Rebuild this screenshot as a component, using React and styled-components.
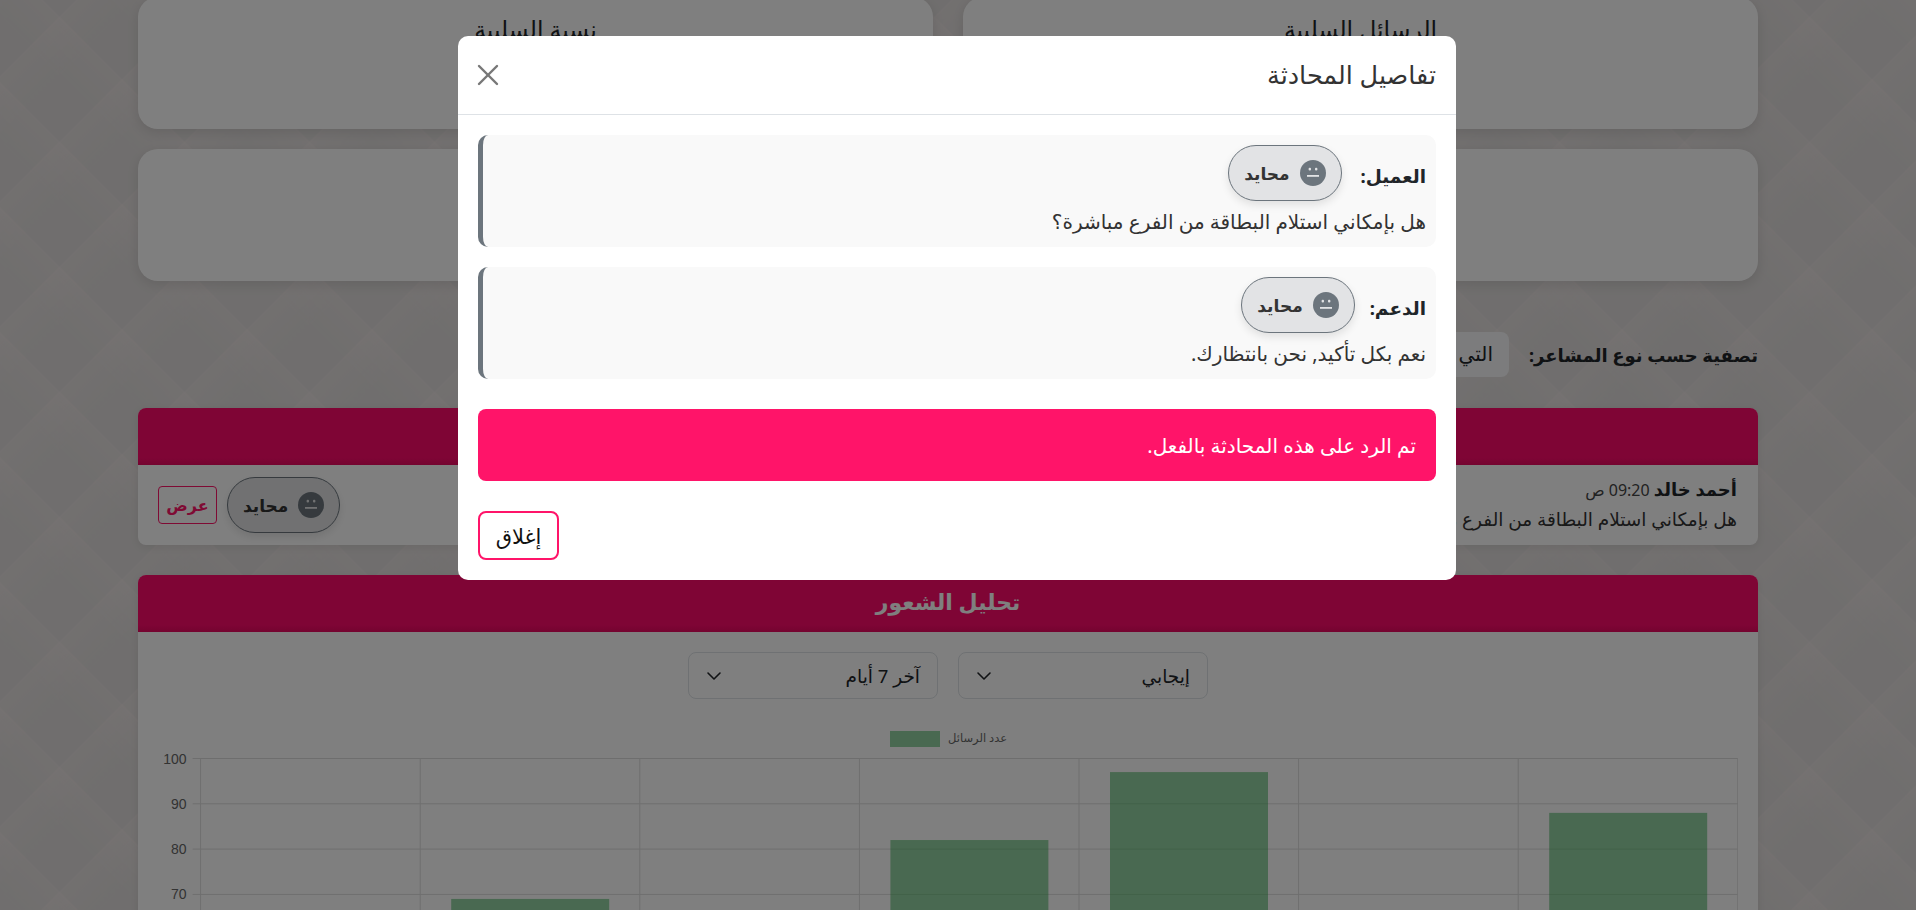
import styled, { createGlobalStyle } from "styled-components";
import { ChevronDown, X } from "lucide-react";

const PINK = "#ff1469";
const HEADER = "#fe0a6b";
const GLOW = "rgba(255, 240, 240, 0.17)";
const SEAM = "rgba(255, 240, 240, 0.16)";

const GlobalStyle = createGlobalStyle`
  html, body {
    margin: 0;
    height: 910px;
    overflow: hidden;
  }
  body {
    font-family: "Noto Sans", "DejaVu Sans", sans-serif;
    color: #212529;
  }
  * { box-sizing: border-box; }
`;

const Page = styled.div`
  direction: rtl;
  height: 910px;
  overflow: hidden;
  padding: 0 158px 0 138px;
  background-color: #e0dddc;
  background-size: 125px 125px;
  background-position: 59.5px 17.5px;
  background-image:
    linear-gradient(45deg, transparent 49.4%, ${SEAM} 50%, transparent 50.6%),
    linear-gradient(-45deg, transparent 49.4%, ${SEAM} 50%, transparent 50.6%),
    linear-gradient(45deg, transparent 24%, ${GLOW} 50%, transparent 50%, transparent 74%, ${GLOW} 100%),
    linear-gradient(-45deg, transparent 24%, ${GLOW} 50%, transparent 50%, transparent 74%, ${GLOW} 100%);
`;

const Scrolled = styled.div`
  margin-top: -3px;
`;

const StatGrid = styled.div`
  display: grid;
  grid-template-columns: 1fr 1fr;
  gap: 20px 30px;
`;

const StatCard = styled.div`
  grid-column: ${(p) => (p.$wide ? "1 / -1" : "auto")};
  height: 132px;
  padding-top: 17px;
  background: #fff;
  border-radius: 20px;
  box-shadow: 0 4px 12px rgba(0, 0, 0, 0.1);
  text-align: center;
  font-size: 23.5px;
  line-height: 30px;
`;

const FilterRow = styled.div`
  display: flex;
  align-items: center;
  gap: 20px;
  height: 45px;
  margin: 51px 0 31px;
`;

const FilterLabel = styled.div`
  font-size: 18px;
  font-weight: 700;
`;

const FilterPill = styled.div`
  padding: 8px 16px;
  height: 45px;
  background: #f8f9fa;
  border-radius: 8px;
  font-size: 20px;
  white-space: nowrap;
`;

const Panel = styled.section`
  background: #fff;
  border-radius: 8px;
  box-shadow: 0 2px 8px rgba(0, 0, 0, 0.08);
  margin-bottom: 30px;
`;

const PanelHeader = styled.div`
  height: 57px;
  line-height: 53px;
  background: linear-gradient(180deg, ${HEADER} 88%, #e8085f);
  border-radius: 8px 8px 0 0;
  color: #fff;
  text-align: center;
  font-size: 22px;
  font-weight: 700;
`;

const MessageRow = styled.div`
  display: flex;
  align-items: center;
  justify-content: space-between;
  height: 80px;
  padding: 0 21px 0 20px;
`;

const MessageName = styled.div`
  margin-top: -2px;
  font-size: 16px;
  line-height: 28px;
  color: #444;

  b {
    font-size: 18px;
    color: #212529;
  }
`;

const MessageText = styled.div`
  font-size: 18.5px;
  line-height: 30px;
  color: #333;
`;

const RowActions = styled.div`
  display: flex;
  align-items: center;
  gap: 10px;
`;

const ViewButton = styled.button`
  width: 59px;
  height: 38px;
  padding: 0;
  background: transparent;
  border: 1px solid ${PINK};
  border-radius: 4px;
  color: ${PINK};
  font: inherit;
  font-size: 16px;
  font-weight: 600;
`;

const Badge = styled.span`
  display: inline-flex;
  align-items: center;
  gap: 10px;
  height: 56px;
  padding: 0 15px;
  background: #e2e3e5;
  border: 1px solid #6c757d;
  border-radius: 30px;
  box-shadow: 0 4px 8px rgba(0, 0, 0, 0.1);
  font-size: 17px;
  font-weight: 600;
  color: #333;
`;

const SelectRow = styled.div`
  display: flex;
  justify-content: center;
  gap: 20px;
  padding-top: 20px;
`;

const Select = styled.div`
  display: flex;
  align-items: center;
  justify-content: space-between;
  width: 250px;
  height: 47px;
  padding: 0 17px 0 13px;
  background: #fff;
  border: 1px solid #dee2e6;
  border-radius: 8px;
  font-size: 18.5px;
`;

const Chart = styled.svg`
  display: block;
  direction: ltr;
  margin: 20px 20px 0;
  font-family: "Liberation Sans", Arial, sans-serif;
`;

const Overlay = styled.div`
  position: fixed;
  inset: 0;
  display: flex;
  justify-content: center;
  align-items: flex-start;
  padding: 36px 2px 0 0;
  background: rgba(0, 0, 0, 0.5);
  direction: rtl;
`;

const Modal = styled.div`
  width: 998px;
  height: 544px;
  background: #fff;
  border-radius: 10px;
`;

const ModalHeader = styled.div`
  display: flex;
  align-items: center;
  justify-content: space-between;
  height: 79px;
  padding: 0 20px;
  border-bottom: 1px solid #dee2e6;
`;

const ModalTitle = styled.h5`
  margin: 0 0 2px;
  font-size: 25.5px;
  font-weight: 400;
  color: #333;
`;

const CloseButton = styled.button`
  display: flex;
  padding: 0;
  margin-left: -8px;
  background: none;
  border: 0;
  color: #777;
`;

const ModalBody = styled.div`
  padding: 20px;
`;

const Bubble = styled.div`
  height: 112px;
  margin-bottom: 20px;
  padding: 10px;
  background: #f9f9f9;
  border-left: 5px solid #6c757d;
  border-radius: 10px;
`;

const BubbleHead = styled.div`
  display: flex;
  align-items: center;
  gap: ${(p) => p.$gap}px;
  font-size: 18.5px;
  font-weight: 700;
`;

const BubbleLabel = styled.span`
  padding-top: 4px;
`;

const BubbleText = styled.p`
  margin: 6px 0 0;
  font-size: 20px;
  line-height: 30px;
  font-weight: 400;
  color: #333;
`;

const Alert = styled.div`
  display: flex;
  align-items: center;
  height: 72px;
  margin: 30px 0;
  padding: 0 20px;
  background: ${PINK};
  border-radius: 8px;
  color: #fff;
  font-size: 20px;
`;

const CloseAction = styled.button`
  display: block;
  width: 81px;
  height: 49px;
  padding: 0;
  margin-right: auto;
  background: #fff;
  border: 2px solid ${PINK};
  border-radius: 8px;
  color: #111;
  font: inherit;
  font-size: 21px;
`;

const NeutralFace = () => (
  <svg width="26" height="26" viewBox="0 0 26 26">
    <circle cx="13" cy="13" r="13" fill="#6c757d" />
    <rect x="8.6" y="7.8" width="2.4" height="2.6" rx="1" fill="#e2e3e5" />
    <rect x="15" y="7.8" width="2.4" height="2.6" rx="1" fill="#e2e3e5" />
    <rect x="7" y="15" width="12" height="1.8" fill="#e2e3e5" />
  </svg>
);

const bars = [55, 69, 45, 82, 97, 60, 88];
const PLOT_LEFT = 42.6;
const STEP_X = 219.6;
const PLOT_TOP = 39.5;
const STEP_Y = 45.3;
const BAR_FILL = "rgba(40, 167, 69, 0.5)";
const yOf = (value) => PLOT_TOP + ((100 - value) / 10) * STEP_Y;

const SentimentChart = () => (
  <Chart width="1580" height="540" viewBox="0 0 1580 540">
    <rect x="732" y="12" width="50" height="16" fill={BAR_FILL} />
    <text x="790" y="23" fontSize="11.5" fill="#666" fontFamily="'Noto Sans', 'DejaVu Sans', sans-serif">
      عدد الرسائل
    </text>
    {Array.from({ length: 11 }, (_, i) => (
      <g key={i}>
        <line x1={PLOT_LEFT - 8} x2={PLOT_LEFT + STEP_X * 7} y1={PLOT_TOP + i * STEP_Y} y2={PLOT_TOP + i * STEP_Y} stroke="#ddd" />
        <text x={PLOT_LEFT - 14} y={PLOT_TOP + i * STEP_Y + 5} textAnchor="end" fontSize="14" fill="#666">
          {100 - i * 10}
        </text>
      </g>
    ))}
    {Array.from({ length: 8 }, (_, i) => (
      <line key={i} x1={PLOT_LEFT + i * STEP_X} x2={PLOT_LEFT + i * STEP_X} y1={PLOT_TOP} y2={PLOT_TOP + 10 * STEP_Y} stroke="#ddd" />
    ))}
    {bars.map((value, i) => (
      <rect
        key={i}
        x={PLOT_LEFT + i * STEP_X + 31}
        y={yOf(value)}
        width="158"
        height={PLOT_TOP + 10 * STEP_Y - yOf(value)}
        fill={BAR_FILL}
      />
    ))}
  </Chart>
);

const App = () => {
  return (
    <>
      <GlobalStyle />
      <Page>
        <Scrolled>
          <StatGrid>
            <StatCard>الرسائل السلبية</StatCard>
            <StatCard>نسبة السلبية</StatCard>
            <StatCard $wide />
          </StatGrid>

          <FilterRow>
            <FilterLabel>تصفية حسب نوع المشاعر:</FilterLabel>
            <FilterPill>التي تم الرد عليها</FilterPill>
          </FilterRow>

          <Panel>
            <PanelHeader>الرسائل</PanelHeader>
            <MessageRow>
              <div>
                <MessageName>
                  <b>أحمد خالد</b> 09:20 ص
                </MessageName>
                <MessageText>هل بإمكاني استلام البطاقة من الفرع مباشرة؟</MessageText>
              </div>
              <RowActions>
                <Badge>
                  <NeutralFace />
                  محايد
                </Badge>
                <ViewButton>عرض</ViewButton>
              </RowActions>
            </MessageRow>
          </Panel>

          <Panel>
            <PanelHeader>تحليل الشعور</PanelHeader>
            <SelectRow>
              <Select>
                إيجابي
                <ChevronDown size={24} strokeWidth={1.6} />
              </Select>
              <Select>
                آخر 7 أيام
                <ChevronDown size={24} strokeWidth={1.6} />
              </Select>
            </SelectRow>
            <SentimentChart />
          </Panel>
        </Scrolled>
      </Page>

      <Overlay>
        <Modal>
          <ModalHeader>
            <ModalTitle>تفاصيل المحادثة</ModalTitle>
            <CloseButton>
              <X size={36} strokeWidth={1.6} />
            </CloseButton>
          </ModalHeader>
          <ModalBody>
            <Bubble>
              <BubbleHead $gap={19}>
                <BubbleLabel>العميل:</BubbleLabel>
                <Badge>
                  <NeutralFace />
                  محايد
                </Badge>
              </BubbleHead>
              <BubbleText>هل بإمكاني استلام البطاقة من الفرع مباشرة؟</BubbleText>
            </Bubble>
            <Bubble>
              <BubbleHead $gap={15}>
                <BubbleLabel>الدعم:</BubbleLabel>
                <Badge>
                  <NeutralFace />
                  محايد
                </Badge>
              </BubbleHead>
              <BubbleText>نعم بكل تأكيد, نحن بانتظارك.</BubbleText>
            </Bubble>
            <Alert>تم الرد على هذه المحادثة بالفعل.</Alert>
            <CloseAction>إغلاق</CloseAction>
          </ModalBody>
        </Modal>
      </Overlay>
    </>
  );
};

export default App;
